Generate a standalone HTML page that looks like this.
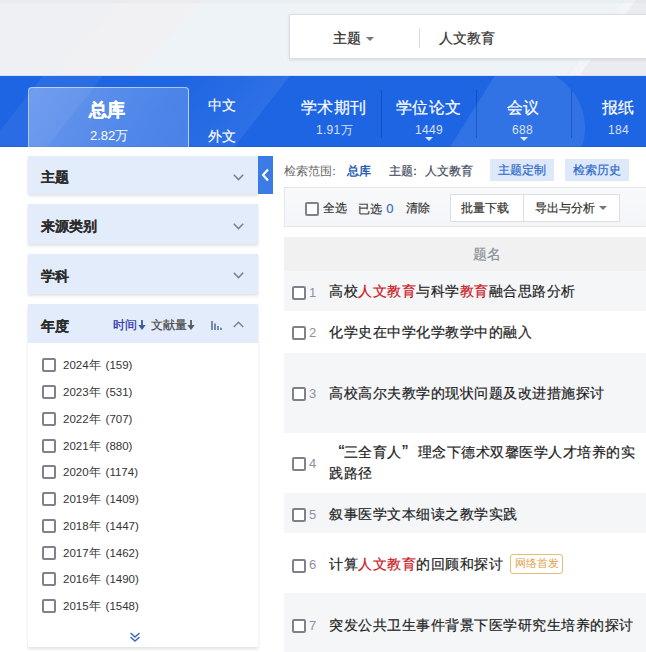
<!DOCTYPE html>
<html><head><meta charset="utf-8">
<style>
*{margin:0;padding:0;box-sizing:border-box}
html,body{width:646px;height:652px;overflow:hidden;background:#fff}
body{position:relative;font-family:"Liberation Sans",sans-serif;color:#333}
.a{position:absolute;white-space:nowrap;line-height:1}
.s{-webkit-text-stroke:0.2px currentColor}
#top{position:absolute;left:0;top:0;width:646px;height:77px;background:#eef0f4;overflow:hidden}
#search{position:absolute;left:289px;top:14px;width:400px;height:45px;background:#fff;border:1px solid #dcdee2;box-shadow:0 1px 3px rgba(0,0,0,.10)}
#band{position:absolute;left:0;top:76px;width:646px;height:71px;background:#1e65e3;overflow:hidden}
.tabact{position:absolute;left:28px;top:87px;width:161px;height:62px;border:1px solid rgba(255,255,255,.55);border-bottom:none;border-radius:4px 4px 0 0;background:linear-gradient(120deg,rgba(255,255,255,.34),rgba(255,255,255,.16))}
.w{color:#fff}
.div{position:absolute;top:90px;width:1px;height:48px;background:rgba(0,20,90,.28)}
.tri{position:absolute;width:0;height:0;border-left:4.5px solid transparent;border-right:4.5px solid transparent;border-top:4px solid rgba(255,255,255,.85)}
.panel{position:absolute;left:28px;width:230px;background:#e3ecfb;box-shadow:0 2px 3px rgba(0,0,0,.12)}
.ptitle{position:absolute;left:12.5px;font-size:14px;font-weight:bold;color:#2b2b2b;margin-top:.5px;-webkit-text-stroke:.08px currentColor}
.chev{position:absolute;left:205px}
.cb{position:absolute;width:14px;height:14px;border:2px solid #80818c;border-radius:2px;background:#fff}
.yr{position:absolute;left:63px;font-size:11.5px;color:#333}
.yr i{font-style:normal;display:inline-block;width:5px}
.row{position:absolute;left:284px;width:362px}
.g{background:#f5f6f8}
.num{position:absolute;left:309px;font-size:13px;color:#8d929c}
.tt{position:absolute;left:329px;font-size:14px;letter-spacing:.5px;color:#1e1e1e;-webkit-text-stroke:0.2px currentColor}
.r{color:#c9181e}
.tag{position:absolute;top:159px;height:22px;background:#dde8fb;color:#2d6ac7;font-size:12px;line-height:22px;text-align:center;white-space:nowrap}
</style></head><body>

<div id="top">
  <div style="position:absolute;left:88px;top:0;width:80px;height:77px;background:#f1f1f4;transform:skewX(-41deg)"></div>
  <div style="position:absolute;left:167px;top:0;width:430px;height:77px;background:#eef3f8;transform:skewX(-41deg)"></div>
  <div style="position:absolute;left:596px;top:0;width:12px;height:77px;background:#f2f5f8;transform:skewX(-37deg)"></div>
  <div style="position:absolute;left:607px;top:0;width:100px;height:77px;background:#ebecef;transform:skewX(-37deg)"></div>
  <div style="position:absolute;left:0;top:0;width:646px;height:3px;background:rgba(0,0,20,.025)"></div>
  <div style="position:absolute;left:0;top:75px;width:646px;height:1px;background:#d3e2f7"></div>
</div>
<div id="search">
  <div class="a s" style="left:43px;top:16px;font-size:14px;color:#222">主题</div>
  <div class="tri" style="left:76px;top:22px;border-top-color:#777;border-left-width:4px;border-right-width:4px"></div>
  <div style="position:absolute;left:129px;top:13px;width:1px;height:20px;background:#dcdcdc"></div>
  <div class="a s" style="left:149px;top:16px;font-size:14px;color:#333">人文教育</div>
</div>

<div id="band">
  <div style="position:absolute;left:15px;top:0;width:60px;height:71px;background:rgba(255,255,255,.05);transform:skewX(-38deg)"></div>
  <div style="position:absolute;left:152px;top:0;width:110px;height:71px;background:linear-gradient(90deg,rgba(255,255,255,0),rgba(255,255,255,.07));transform:skewX(-38deg)"></div>
  <svg style="position:absolute;left:0;top:0" width="646" height="71" viewBox="0 0 646 71"><path d="M494.2 0.5 A60 60 0 0 1 582 71 L450 71 Z" fill="rgba(255,255,255,.085)"/></svg>
  <div style="position:absolute;left:0;top:70px;width:646px;height:1px;background:rgba(0,30,120,.12)"></div>
</div>
<div class="tabact"></div>
<div class="a w" style="left:89px;top:101px;font-size:18px;font-weight:bold;-webkit-text-stroke:.35px #fff">总库</div>
<div class="a w" style="left:90px;top:129px;font-size:13px">2.82万</div>
<div class="a w" style="left:208px;top:98px;font-size:14px;-webkit-text-stroke:.15px #fff">中文</div>
<div class="a w" style="left:208px;top:129px;font-size:14px;-webkit-text-stroke:.15px #fff">外文</div>

<div class="a w" style="left:301px;top:100px;font-size:16px;letter-spacing:.4px;-webkit-text-stroke:.2px #fff">学术期刊</div>
<div class="a w" style="left:316px;top:124px;font-size:12px;letter-spacing:.3px;opacity:.8">1.91万</div>
<div class="div" style="left:381px"></div>
<div class="a w" style="left:396px;top:100px;font-size:16px;letter-spacing:.4px;-webkit-text-stroke:.2px #fff">学位论文</div>
<div class="a w" style="left:415px;top:124px;font-size:12px;letter-spacing:.3px;opacity:.8">1449</div>
<div class="tri" style="left:424.5px;top:137px"></div>
<div class="div" style="left:476px"></div>
<div class="a w" style="left:507px;top:100px;font-size:16px;letter-spacing:.4px;-webkit-text-stroke:.2px #fff">会议</div>
<div class="a w" style="left:512px;top:124px;font-size:12px;letter-spacing:.3px;opacity:.8">688</div>
<div class="tri" style="left:519.5px;top:137px"></div>
<div class="div" style="left:571px"></div>
<div class="a w" style="left:602px;top:100px;font-size:16px;letter-spacing:.4px;-webkit-text-stroke:.2px #fff">报纸</div>
<div class="a w" style="left:608px;top:124px;font-size:12px;letter-spacing:.3px;opacity:.8">184</div>

<!-- sidebar -->
<div class="panel" style="top:156px;height:38px"><div class="a ptitle" style="top:13px">主题</div>
  <svg class="chev" style="top:18px" width="11" height="7" viewBox="0 0 11 7"><path d="M0.8 0.8 L5.5 5.6 L10.2 0.8" fill="none" stroke="#75839c" stroke-width="1.5"/></svg></div>
<div class="panel" style="top:204px;height:40px"><div class="a ptitle" style="top:14px">来源类别</div>
  <svg class="chev" style="top:19px" width="11" height="7" viewBox="0 0 11 7"><path d="M0.8 0.8 L5.5 5.6 L10.2 0.8" fill="none" stroke="#75839c" stroke-width="1.5"/></svg></div>
<div class="panel" style="top:254px;height:40px"><div class="a ptitle" style="top:14px">学科</div>
  <svg class="chev" style="top:18px" width="11" height="7" viewBox="0 0 11 7"><path d="M0.8 0.8 L5.5 5.6 L10.2 0.8" fill="none" stroke="#75839c" stroke-width="1.5"/></svg></div>
<div class="panel" style="top:304px;height:343px;background:#fff">
  <div style="position:absolute;left:0;top:0;width:230px;height:39px;background:#e3ecfb">
    <div class="a ptitle" style="top:14px">年度</div>
    <div class="a s" style="left:85px;top:15px;font-size:12px;color:#2a2ea6">时间</div>
    <svg style="position:absolute;left:110px;top:16px" width="8" height="10" viewBox="0 0 8 10"><path d="M4 0V6" stroke="#3d5b8c" stroke-width="1.8"/><path d="M0.3 5H7.7L4 10Z" fill="#3d5b8c"/></svg>
    <div class="a s" style="left:123px;top:15px;font-size:12px;color:#444">文献量</div>
    <svg style="position:absolute;left:159px;top:16px" width="8" height="10" viewBox="0 0 8 10"><path d="M4 0V6" stroke="#5a5a5a" stroke-width="1.8"/><path d="M0.3 5H7.7L4 10Z" fill="#5a5a5a"/></svg>
    <svg style="position:absolute;left:183px;top:17px" width="12" height="9" viewBox="0 0 12 9"><path d="M1 0V9M4 2.5V9M7 5V9M10 6.8V9" stroke="#6b7fa6" stroke-width="1.8"/></svg>
    <svg class="chev" style="top:17px" width="11" height="7" viewBox="0 0 11 7"><path d="M0.8 6 L5.5 1.2 L10.2 6" fill="none" stroke="#75839c" stroke-width="1.5"/></svg>
  </div>
  <svg style="position:absolute;left:101px;top:328px" width="12" height="11" viewBox="0 0 12 11"><path d="M1.5 1 L6 5 L10.5 1 M1.5 5 L6 9 L10.5 5" fill="none" stroke="#3b66bd" stroke-width="1.5"/></svg>
</div>

<div style="position:absolute;left:258px;top:156px;width:15px;height:38px;background:#3a7be6">
  <svg style="position:absolute;left:2px;top:12px" width="10" height="14" viewBox="0 0 10 14"><path d="M8 1.5 L3 7 L8 12.5" fill="none" stroke="#fff" stroke-width="2.2"/></svg>
</div>

<!-- years -->
<div class="cb" style="left:42px;top:358px"></div><div class="a yr" style="top:360px">2024年<i></i>(159)</div>
<div class="cb" style="left:42px;top:385px"></div><div class="a yr" style="top:387px">2023年<i></i>(531)</div>
<div class="cb" style="left:42px;top:412px"></div><div class="a yr" style="top:414px">2022年<i></i>(707)</div>
<div class="cb" style="left:42px;top:439px"></div><div class="a yr" style="top:441px">2021年<i></i>(880)</div>
<div class="cb" style="left:42px;top:465px"></div><div class="a yr" style="top:467px">2020年<i></i>(1174)</div>
<div class="cb" style="left:42px;top:492px"></div><div class="a yr" style="top:494px">2019年<i></i>(1409)</div>
<div class="cb" style="left:42px;top:519px"></div><div class="a yr" style="top:521px">2018年<i></i>(1447)</div>
<div class="cb" style="left:42px;top:546px"></div><div class="a yr" style="top:548px">2017年<i></i>(1462)</div>
<div class="cb" style="left:42px;top:572px"></div><div class="a yr" style="top:574px">2016年<i></i>(1490)</div>
<div class="cb" style="left:42px;top:599px"></div><div class="a yr" style="top:601px">2015年<i></i>(1548)</div>

<!-- right -->
<div class="a" style="left:284px;top:165px;font-size:12px;color:#6a6a6a">检索范围<span style="position:relative;left:-4px">：</span></div>
<div class="a" style="left:347px;top:165px;font-size:12px;color:#2a5db5;font-weight:bold">总库</div>
<div class="a s" style="left:389px;top:165px;font-size:12px;color:#3f4a5e">主题<span style="position:relative;left:-4px">：</span>人文教育</div>
<div class="tag s" style="left:490px;width:64px">主题定制</div>
<div class="tag s" style="left:565px;width:64px">检索历史</div>

<div style="position:absolute;left:284px;top:187px;width:380px;height:40px;background:linear-gradient(#f8f9fb,#f3f5f8);border:1px solid #e3e6ea"></div>
<div class="cb" style="left:305px;top:202px"></div>
<div class="a s" style="left:323px;top:202px;font-size:12px;letter-spacing:.3px;color:#333">全选</div>
<div class="a s" style="left:358px;top:202px;font-size:12px;letter-spacing:.3px;color:#333">已选 <span style="color:#3d6db5;font-size:13px">0</span></div>
<div class="a s" style="left:406px;top:202px;font-size:12px;letter-spacing:.3px;color:#333">清除</div>
<div style="position:absolute;left:450px;top:194px;width:74px;height:28px;background:#fff;border:1px solid #dcdfe4"></div>
<div style="position:absolute;left:523px;top:194px;width:97px;height:28px;background:#fff;border:1px solid #dcdfe4"></div>
<div class="a s" style="left:461px;top:202px;font-size:12px;color:#333">批量下载</div>
<div class="a s" style="left:535px;top:202px;font-size:12px;color:#333">导出与分析</div>
<div class="tri" style="left:599px;top:206px;border-top-color:#777;border-left-width:4px;border-right-width:4px"></div>

<div class="row" style="top:237px;height:34px;background:#f1f1f1"></div>
<div class="a s" style="left:473px;top:247px;font-size:14px;color:#8a8f99">题名</div>

<div class="row g" style="top:271px;height:40px"></div>
<div class="row" style="top:311px;height:42px"></div>
<div class="row g" style="top:353px;height:80px"></div>
<div class="row" style="top:433px;height:60px"></div>
<div class="row g" style="top:493px;height:40px"></div>
<div class="row" style="top:533px;height:60px"></div>
<div class="row g" style="top:593px;height:60px"></div>

<div class="cb" style="left:292px;top:286px"></div><div class="a num" style="top:286px">1</div>
<div class="a tt" style="top:284px">高校<span class="r">人文教育</span>与科学<span class="r">教育</span>融合思路分析</div>
<div class="cb" style="left:292px;top:326px"></div><div class="a num" style="top:326px">2</div>
<div class="a tt" style="top:325px">化学史在中学化学教学中的融入</div>
<div class="cb" style="left:292px;top:387px"></div><div class="a num" style="top:387px">3</div>
<div class="a tt" style="top:386px">高校高尔夫教学的现状问题及改进措施探讨</div>
<div class="cb" style="left:292px;top:457px"></div><div class="a num" style="top:457px">4</div>
<div class="a tt" style="top:445px"><span style="display:inline-block;width:14.5px;text-align:right;font-size:18px;line-height:14px;vertical-align:top;letter-spacing:0;position:relative;left:1px">“</span>三全育人<span style="display:inline-block;width:16px;padding-left:0.5px;font-size:18px;line-height:14px;vertical-align:top;letter-spacing:0">”</span>理念下德术双馨医学人才培养的实</div>
<div class="a tt" style="top:466px">践路径</div>
<div class="cb" style="left:292px;top:508px"></div><div class="a num" style="top:508px">5</div>
<div class="a tt" style="top:507px">叙事医学文本细读之教学实践</div>
<div class="cb" style="left:292px;top:559px"></div><div class="a num" style="top:558px">6</div>
<div class="a tt" style="top:557px">计算<span class="r">人文教育</span>的回顾和探讨</div>
<div style="position:absolute;left:510px;top:554px;width:53px;height:19.5px;border:1px solid #e9bb78;border-radius:3px;color:#e2a24a;font-size:11px;line-height:17px;text-align:center;white-space:nowrap">网络首发</div>
<div class="cb" style="left:292px;top:619px"></div><div class="a num" style="top:619px">7</div>
<div class="a tt" style="top:618px">突发公共卫生事件背景下医学研究生培养的探讨</div>

</body></html>
